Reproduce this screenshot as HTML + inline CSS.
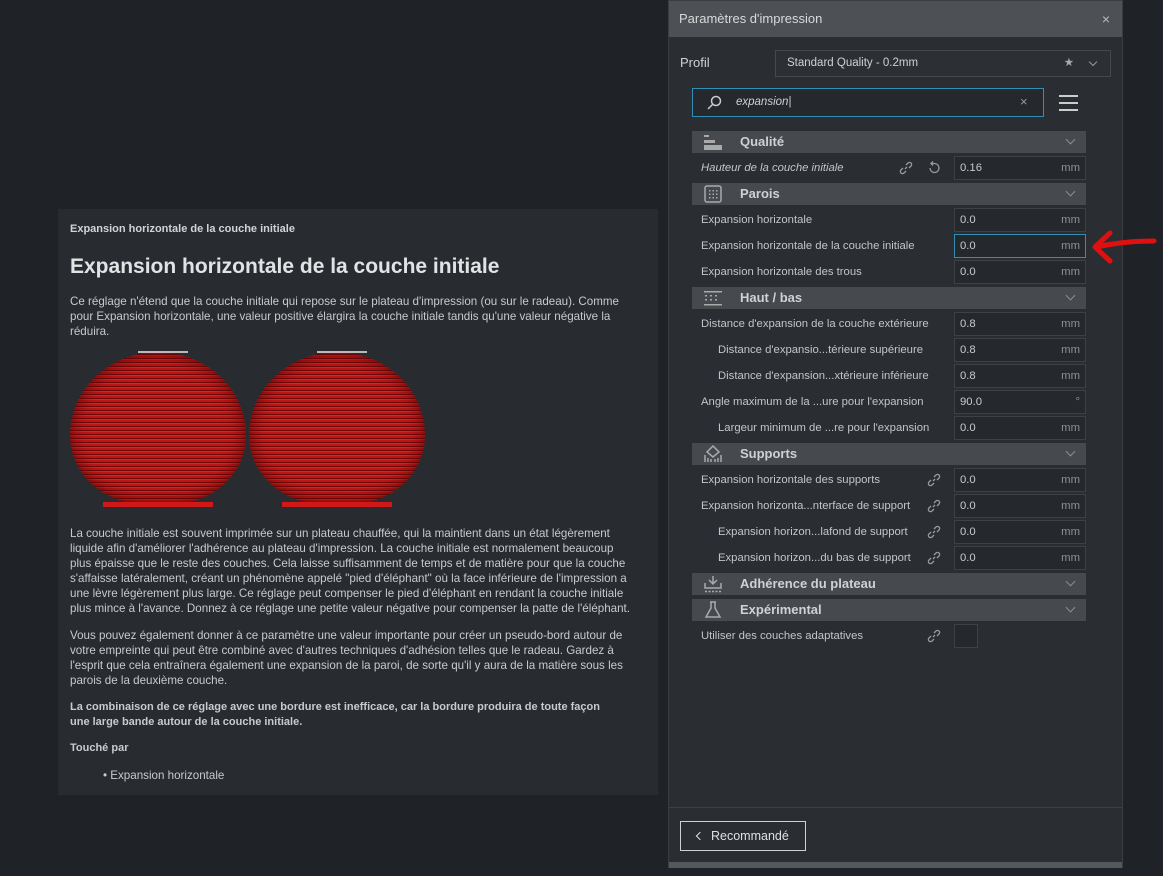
<!DOCTYPE html>
<html><head><meta charset="utf-8"><style>
*{margin:0;padding:0;box-sizing:border-box}
body{width:1163px;height:876px;background:#1f2226;font-family:"Liberation Sans","DejaVu Sans",sans-serif;position:relative;overflow:hidden;color:#c9cbcd}
.abs{position:absolute}
#tip{left:58px;top:209px;width:600px;height:586px;background:#282c31}
#tip p{position:absolute;left:12px;font-size:11.6px;line-height:15px;color:#c8cacc;white-space:nowrap}
#dlg{left:668px;top:0;width:455px;height:868px;background:#2a2e33;border:1px solid #3a3e43}
#title{left:0;top:0;width:453px;height:36px;background:#4d5155;color:#d8d9da;font-size:13px;line-height:36px;padding-left:10px}
.hdr{position:absolute;left:692px;width:394px;height:22px;background:#464a4f;color:#cfd1d3;font-weight:bold;font-size:13px;line-height:22px;padding-left:48px}
.hdr .chev{position:absolute;right:12px;top:5px;width:7px;height:7px;border-right:1px solid #8a8d90;border-bottom:1px solid #8a8d90;transform:rotate(45deg)}
.hdr svg{position:absolute;left:12px;top:2px}
.lbl{position:absolute;left:701px;font-size:11.3px;color:#c3c5c7;line-height:14px}
.ind{left:718px}
.inp{position:absolute;left:954px;width:132px;height:24px;border:1px solid #3d4146;background:#25292d;font-size:11.3px;color:#c8cacc;line-height:22px;padding-left:5px}
.inp span{position:absolute;right:5px;top:0;color:#8e9194}
.link{position:absolute;left:927px;width:14px;height:14px}
.sph{position:absolute;top:143px;width:176px;height:152px;border-radius:50% 50% 42% 42%/55% 55% 45% 45%;background:repeating-linear-gradient(180deg,#c01515 0 2px,#700808 2px 3px,#e02424 3px 4px);box-shadow:inset 0 0 18px #5a0404}
</style></head><body>

<div class="abs" id="tip">
<div class="abs" style="left:12px;top:14px;font-size:11px;font-weight:bold;color:#d2d4d6">Expansion horizontale de la couche initiale</div>
<div class="abs" style="left:12px;top:46px;font-size:21px;font-weight:bold;color:#e2e3e4">Expansion horizontale de la couche initiale</div>
<p style="top:85px">Ce réglage n'étend que la couche initiale qui repose sur le plateau d'impression (ou sur le radeau). Comme<br>pour Expansion horizontale, une valeur positive élargira la couche initiale tandis qu'une valeur négative la<br>réduira.</p>
<div class="sph" style="left:12px"></div>
<div class="sph" style="left:191px"></div>
<div class="abs" style="left:80px;top:142px;width:50px;height:2px;background:#ddd;opacity:.8"></div>
<div class="abs" style="left:259px;top:142px;width:50px;height:2px;background:#ddd;opacity:.8"></div>
<div class="abs" style="left:45px;top:293px;width:110px;height:5px;background:#d01818"></div>
<div class="abs" style="left:224px;top:293px;width:110px;height:5px;background:#d01818"></div>
<p style="top:317px">La couche initiale est souvent imprimée sur un plateau chauffée, qui la maintient dans un état légèrement<br>liquide afin d'améliorer l'adhérence au plateau d'impression. La couche initiale est normalement beaucoup<br>plus épaisse que le reste des couches. Cela laisse suffisamment de temps et de matière pour que la couche<br>s'affaisse latéralement, créant un phénomène appelé "pied d'éléphant" où la face inférieure de l'impression a<br>une lèvre légèrement plus large. Ce réglage peut compenser le pied d'éléphant en rendant la couche initiale<br>plus mince à l'avance. Donnez à ce réglage une petite valeur négative pour compenser la patte de l'éléphant.</p>
<p style="top:419px">Vous pouvez également donner à ce paramètre une valeur importante pour créer un pseudo-bord autour de<br>votre empreinte qui peut être combiné avec d'autres techniques d'adhésion telles que le radeau. Gardez à<br>l'esprit que cela entraînera également une expansion de la paroi, de sorte qu'il y aura de la matière sous les<br>parois de la deuxième couche.</p>
<p style="top:491px;font-weight:bold;font-size:11px">La combinaison de ce réglage avec une bordure est inefficace, car la bordure produira de toute façon<br>une large bande autour de la couche initiale.</p>
<p style="top:532px;font-weight:bold;font-size:11px">Touché par</p>
<p style="top:559px;left:45px">• Expansion horizontale</p>
</div>

<div class="abs" id="dlg">
<div class="abs" id="title">Paramètres d'impression<span style="position:absolute;right:12px;font-size:14px;color:#bbb">×</span></div>
<div class="abs" style="left:11px;top:54px;font-size:13px;color:#d0d2d4">Profil</div>
<div class="abs" style="left:106px;top:49px;width:336px;height:27px;border:1px solid #45494e;background:#2c3035;font-size:11.5px;line-height:25px;padding-left:11px;color:#cfd1d3">Standard Quality - 0.2mm<span style="position:absolute;right:36px;color:#aaa">★</span><span style="position:absolute;right:14px;top:8px;width:6px;height:6px;border-right:1px solid #999;border-bottom:1px solid #999;transform:rotate(45deg)"></span></div>
<div class="abs" style="left:23px;top:87px;width:352px;height:29px;border:1px solid #2f8fb5;background:#25292d"></div>
<svg class="abs" style="left:37px;top:94px" width="16" height="16"><circle cx="10" cy="6" r="4.5" fill="none" stroke="#ccc" stroke-width="1.5"/><line x1="7" y1="9" x2="2" y2="14" stroke="#ccc" stroke-width="1.5"/></svg>
<div class="abs" style="left:67px;top:95px;font-size:11.5px;font-style:italic;color:#cfd1d3">expansion|</div>
<div class="abs" style="left:351px;top:93px;font-size:13px;color:#999">×</div>
<div class="abs" style="left:390px;top:94px;width:19px;height:2px;background:#ccc;box-shadow:0 7px 0 #ccc,0 14px 0 #ccc"></div>
<div class="abs" style="left:0;top:806px;width:453px;height:1px;background:#3d4146"></div>
<div class="abs" style="left:11px;top:820px;width:126px;height:30px;border:1px solid #d0d0d0;font-size:12.5px;line-height:28px;padding-left:30px;color:#e0e0e0">Recommandé<span style="position:absolute;left:16px;top:11px;width:6px;height:6px;border-left:1px solid #ddd;border-bottom:1px solid #ddd;transform:rotate(45deg)"></span></div>
<div class="abs" style="left:0;top:861px;width:453px;height:6px;background:#55595d"></div>
</div>

<div class="hdr" style="top:131px"><svg width="20" height="18"><rect x="0" y="2" width="5" height="2" fill="#aaa"/><rect x="0" y="7" width="11" height="3" fill="#aaa"/><rect x="0" y="12" width="18" height="5" fill="#aaa"/></svg>Qualité<i class="chev"></i></div>
<div class="lbl" style="top:161px;font-style:italic">Hauteur de la couche initiale</div>
<svg class="link" style="left:899px;top:161px" viewBox="0 0 14 14"><path d="M6 8l2-2M4 7l-2 2a2 2 0 003 3l2-2M10 7l2-2a2 2 0 00-3-3L7 4" fill="none" stroke="#999" stroke-width="1.3"/></svg>
<svg class="link" style="left:927px;top:161px" viewBox="0 0 14 14"><path d="M3 7a4.5 4.5 0 104.5-4.5H5M6 0.5L4 2.5 6 4.5" fill="none" stroke="#999" stroke-width="1.3"/></svg>
<div class="inp" style="top:156px">0.16<span>mm</span></div>

<div class="hdr" style="top:183px"><svg width="20" height="18"><rect x="1" y="1" width="16" height="16" rx="2" fill="none" stroke="#aaa" stroke-width="1.5"/><g fill="#aaa"><rect x="5" y="5" width="1.5" height="1.5"/><rect x="8.5" y="5" width="1.5" height="1.5"/><rect x="12" y="5" width="1.5" height="1.5"/><rect x="5" y="8.5" width="1.5" height="1.5"/><rect x="8.5" y="8.5" width="1.5" height="1.5"/><rect x="12" y="8.5" width="1.5" height="1.5"/><rect x="5" y="12" width="1.5" height="1.5"/><rect x="8.5" y="12" width="1.5" height="1.5"/><rect x="12" y="12" width="1.5" height="1.5"/></g></svg>Parois<i class="chev"></i></div>
<div class="lbl" style="top:213px">Expansion horizontale</div><div class="inp" style="top:208px">0.0<span>mm</span></div>
<div class="lbl" style="top:239px">Expansion horizontale de la couche initiale</div><div class="inp" style="top:234px;border-color:#2f8fb5">0.0<span>mm</span></div>
<div class="lbl" style="top:265px">Expansion horizontale des trous</div><div class="inp" style="top:260px">0.0<span>mm</span></div>
<svg class="abs" style="left:1090px;top:228px" width="68" height="38"><path d="M64 13 C45 13 25 15 6 19 M20 5 L5 19 L20 33" fill="none" stroke="#e01010" stroke-width="5" stroke-linecap="round" stroke-linejoin="round"/></svg>

<div class="hdr" style="top:287px"><svg width="20" height="18" fill="#aaa"><rect x="0" y="2" width="18" height="1.5"/><rect x="1" y="6" width="2" height="1.5"/><rect x="6" y="6" width="2" height="1.5"/><rect x="11" y="6" width="2" height="1.5"/><rect x="1" y="10" width="2" height="1.5"/><rect x="6" y="10" width="2" height="1.5"/><rect x="11" y="10" width="2" height="1.5"/><rect x="0" y="15" width="18" height="1.5"/></svg>Haut / bas<i class="chev"></i></div>
<div class="lbl" style="top:317px">Distance d'expansion de la couche extérieure</div><div class="inp" style="top:312px">0.8<span>mm</span></div>
<div class="lbl ind" style="top:343px">Distance d'expansio...térieure supérieure</div><div class="inp" style="top:338px">0.8<span>mm</span></div>
<div class="lbl ind" style="top:369px">Distance d'expansion...xtérieure inférieure</div><div class="inp" style="top:364px">0.8<span>mm</span></div>
<div class="lbl" style="top:395px">Angle maximum de la ...ure pour l'expansion</div><div class="inp" style="top:390px">90.0<span>°</span></div>
<div class="lbl ind" style="top:421px">Largeur minimum de ...re pour l'expansion</div><div class="inp" style="top:416px">0.0<span>mm</span></div>

<div class="hdr" style="top:443px"><svg width="20" height="18"><path d="M9 1L3 7 9 12 15 7Z M1 10L1 17M4 13V17M7 14V17M11 14V17M14 13V17M17 10V17" fill="none" stroke="#aaa" stroke-width="1.5"/></svg>Supports<i class="chev"></i></div>
<div class="lbl" style="top:473px">Expansion horizontale des supports</div><svg class="link" style="top:473px" viewBox="0 0 14 14"><path d="M6 8l2-2M4 7l-2 2a2 2 0 003 3l2-2M10 7l2-2a2 2 0 00-3-3L7 4" fill="none" stroke="#999" stroke-width="1.3"/></svg><div class="inp" style="top:468px">0.0<span>mm</span></div>
<div class="lbl" style="top:499px">Expansion horizonta...nterface de support</div><svg class="link" style="top:499px" viewBox="0 0 14 14"><path d="M6 8l2-2M4 7l-2 2a2 2 0 003 3l2-2M10 7l2-2a2 2 0 00-3-3L7 4" fill="none" stroke="#999" stroke-width="1.3"/></svg><div class="inp" style="top:494px">0.0<span>mm</span></div>
<div class="lbl ind" style="top:525px">Expansion horizon...lafond de support</div><svg class="link" style="top:525px" viewBox="0 0 14 14"><path d="M6 8l2-2M4 7l-2 2a2 2 0 003 3l2-2M10 7l2-2a2 2 0 00-3-3L7 4" fill="none" stroke="#999" stroke-width="1.3"/></svg><div class="inp" style="top:520px">0.0<span>mm</span></div>
<div class="lbl ind" style="top:551px">Expansion horizon...du bas de support</div><svg class="link" style="top:551px" viewBox="0 0 14 14"><path d="M6 8l2-2M4 7l-2 2a2 2 0 003 3l2-2M10 7l2-2a2 2 0 00-3-3L7 4" fill="none" stroke="#999" stroke-width="1.3"/></svg><div class="inp" style="top:546px">0.0<span>mm</span></div>

<div class="hdr" style="top:573px"><svg width="20" height="18"><path d="M9 1V9M5 5L9 9 13 5M1 8V13H17V8" fill="none" stroke="#aaa" stroke-width="1.5"/><path d="M1 16.5H17" stroke="#aaa" stroke-width="1.5" stroke-dasharray="2 1.5"/></svg>Adhérence du plateau<i class="chev"></i></div>
<div class="hdr" style="top:599px"><svg width="20" height="18"><path d="M6 1H12M7 1V7L2 16H16L11 7V1" fill="none" stroke="#aaa" stroke-width="1.5"/></svg>Expérimental<i class="chev"></i></div>
<div class="lbl" style="top:629px">Utiliser des couches adaptatives</div><svg class="link" style="top:629px" viewBox="0 0 14 14"><path d="M6 8l2-2M4 7l-2 2a2 2 0 003 3l2-2M10 7l2-2a2 2 0 00-3-3L7 4" fill="none" stroke="#999" stroke-width="1.3"/></svg>
<div class="abs" style="left:954px;top:624px;width:24px;height:24px;border:1px solid #3d4146;background:#25292d"></div>
</body></html>
